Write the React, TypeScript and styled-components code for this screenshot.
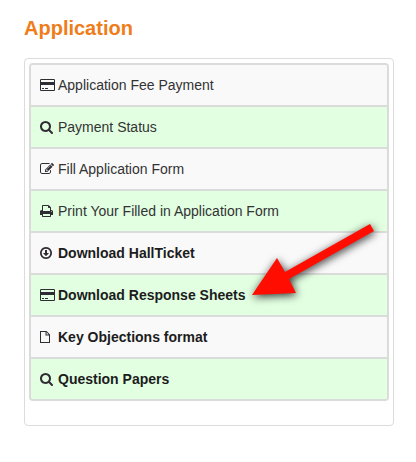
import React from "react";
import styled, { createGlobalStyle } from "styled-components";

const GlobalStyle = createGlobalStyle`
  * { box-sizing: border-box; }
  body {
    margin: 0;
    background: #fff;
    color: #333;
    font-family: "Liberation Sans", Arial, sans-serif;
    font-size: 14px;
    line-height: 20px;
  }
`;

const Page = styled.main`
  padding: 16px 22px 35px 24px;
`;

const Heading = styled.h2`
  margin: 0 0 18px;
  color: #ee7d1a;
  font-size: 20px;
  font-weight: 700;
  line-height: 24px;
`;

const Panel = styled.section`
  position: relative;
  padding: 4px 4px 24px;
  border: 1px solid #dcdcdf;
  border-radius: 4px;
`;

const Menu = styled.ul`
  margin: 0;
  padding: 0;
  list-style: none;
  overflow: hidden;
  border: 2px solid #dadcda;
  border-radius: 4px;
`;

const Item = styled.li`
  background: #f9f9f9;

  &:nth-child(even) {
    background: #e2ffe2;
  }

  & + & {
    border-top: 2px solid #dadcda;
  }
`;

const ItemLink = styled.a<{ $bold?: boolean }>`
  display: flex;
  align-items: center;
  padding: 10px 9px;
  color: ${({ $bold }) => ($bold ? "#1c1c1c" : "#333")};
  font-weight: ${({ $bold }) => ($bold ? 700 : 400)};
  text-decoration: none;
`;

const IconSlot = styled.span`
  display: flex;
  flex: none;
  width: 18px;
`;

const Glyph = styled.svg`
  display: block;
  height: 14px;
  fill: #302c33;
`;

const Pointer = styled.svg`
  position: absolute;
  top: 154px;
  right: 8px;
  width: 152px;
  height: 100px;
  overflow: visible;
  pointer-events: none;
  filter: drop-shadow(1px 2px 4px rgba(0, 0, 0, 0.8));
`;

type IconShape = { width: number; d: string };

const card: IconShape = {
  width: 1920,
  d: "M1760 128q66 0 113 47t47 113v1216q0 66-47 113t-113 47h-1600q-66 0-113-47t-47-113v-1216q0-66 47-113t113-47h1600zm-1600 128q-13 0-22.5 9.5t-9.5 22.5v224h1664v-224q0-13-9.5-22.5t-22.5-9.5h-1600zm1600 1280q13 0 22.5-9.5t9.5-22.5v-608h-1664v608q0 13 9.5 22.5t22.5 9.5h1600zm-1504-128v-128h256v128h-256zm384 0v-128h384v128h-384z",
};
const search: IconShape = {
  width: 1664,
  d: "M1152 832q0-185-131.5-316.5t-316.5-131.5-316.5 131.5-131.5 316.5 131.5 316.5 316.5 131.5 316.5-131.5 131.5-316.5zm512 832q0 52-38 90t-90 38q-54 0-90-38l-343-342q-179 124-399 124-143 0-273.5-55.5t-225-150-150-225-55.5-273.5 55.5-273.5 150-225 225-150 273.5-55.5 273.5 55.5 225 150 150 225 55.5 273.5q0 220-124 399l343 343q37 37 37 90z",
};
const edit: IconShape = {
  width: 1792,
  d: "M888 1184l116-116-152-152-116 116v56h96v96h56zm440-720q-16-16-33 1l-350 350q-17 17-1 33t33-1l350-350q17-17 1-33zm80 594v190q0 119-84.5 203.5t-203.5 84.5h-832q-119 0-203.5-84.5t-84.5-203.5v-832q0-119 84.5-203.5t203.5-84.5h832q63 0 117 25 15 7 18 23 3 17-9 29l-49 49q-14 14-32 8-23-6-45-6h-832q-66 0-113 47t-47 113v832q0 66 47 113t113 47h832q66 0 113-47t47-113v-126q0-13 9-22l64-64q15-15 35-7t20 29zm-96-738l288 288-672 672h-288v-288zm444 132l-92 92-288-288 92-92q28-28 68-28t68 28l152 152q28 28 28 68t-28 68z",
};
const print: IconShape = {
  width: 1664,
  d: "M384 1536h896v-256h-896v256zm0-640h896v-384h-160q-40 0-68-28t-28-68v-160h-640v640zm1152 64q0-26-19-45t-45-19-45 19-19 45 19 45 45 19 45-19 19-45zm128 0v416q0 13-9.5 22.5t-22.5 9.5h-224v160q0 40-28 68t-68 28h-960q-40 0-68-28t-28-68v-160h-224q-13 0-22.5-9.5t-9.5-22.5v-416q0-79 56.5-135.5t135.5-56.5h64v-544q0-40 28-68t68-28h672q40 0 88 20t76 48l152 152q28 28 48 76t20 88v256h64q79 0 135.5 56.5t56.5 135.5z",
};
const download: IconShape = {
  width: 1536,
  d: "M1120 928q0 12-10 24l-319 319q-11 9-23 9t-23-9l-320-320q-15-16-7-35 8-20 30-20h192v-352q0-14 9-23t23-9h192q14 0 23 9t9 23v352h192q14 0 23 9t9 23zm-352-576q-148 0-273 73t-198 198-73 273 73 273 198 198 273 73 273-73 198-198 73-273-73-273-198-198-273-73zm768 544q0 209-103 385.5t-279.5 279.5-385.5 103-385.5-103-279.5-279.5-103-385.5 103-385.5 279.5-279.5 385.5-103 385.5 103 279.5 279.5 103 385.5z",
};
const file: IconShape = {
  width: 1536,
  d: "M0 128H832L1280 576V1664H0ZM128 256V1536H1152V704H704V256ZM832 300V576H1108Z",
};

const items: { label: string; icon: IconShape; bold?: boolean }[] = [
  { label: "Application Fee Payment", icon: card },
  { label: "Payment Status", icon: search },
  { label: "Fill Application Form", icon: edit },
  { label: "Print Your Filled in Application Form", icon: print },
  { label: "Download HallTicket", icon: download, bold: true },
  { label: "Download Response Sheets", icon: card, bold: true },
  { label: "Key Objections format", icon: file, bold: true },
  { label: "Question Papers", icon: search, bold: true },
];

export default function App() {
  return (
    <>
      <GlobalStyle />
      <Page>
        <Heading>Application</Heading>
        <Panel>
          <Menu>
            {items.map(({ label, icon, bold }) => (
              <Item key={label}>
                <ItemLink href="#" $bold={bold}>
                  <IconSlot>
                    <Glyph viewBox={`0 0 ${icon.width} 1792`} aria-hidden="true">
                      <path d={icon.d} fillRule="evenodd" />
                    </Glyph>
                  </IconSlot>
                  {label}
                </ItemLink>
              </Item>
            ))}
          </Menu>
          <Pointer viewBox="0 0 152 100" aria-hidden="true">
            <path
              d="M19 82 L44 45 L52 59 L137 11 L141 18 L56 66 L63 80 Z"
              fill="#ff0d00"
            />
          </Pointer>
        </Panel>
      </Page>
    </>
  );
}
